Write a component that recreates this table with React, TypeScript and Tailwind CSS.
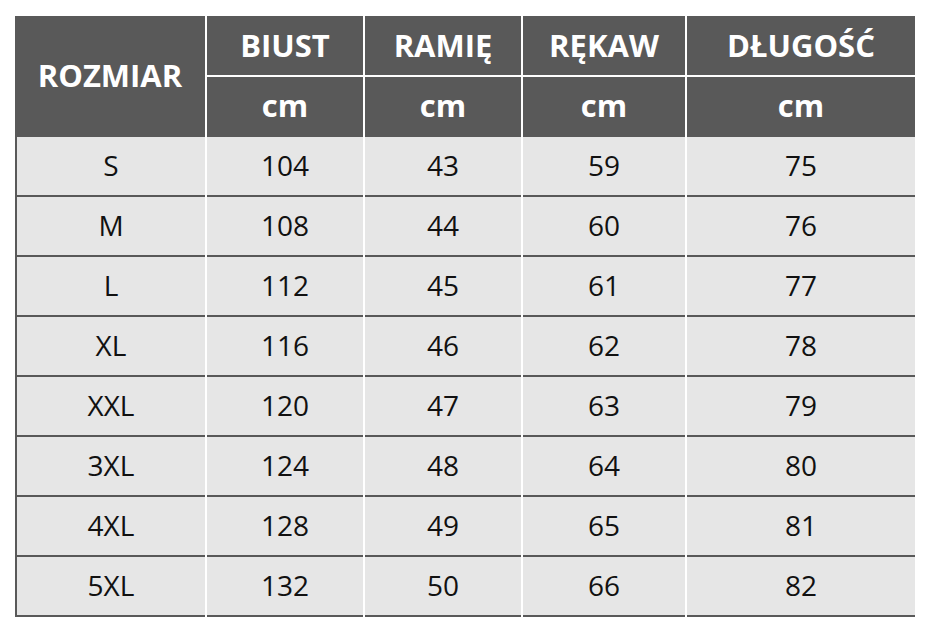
import React from 'react';

const columns = ['BIUST', 'RAMIĘ', 'RĘKAW', 'DŁUGOŚĆ'];

const rows: [string, number, number, number, number][] = [
    ['S', 104, 43, 59, 75],
    ['M', 108, 44, 60, 76],
    ['L', 112, 45, 61, 77],
    ['XL', 116, 46, 62, 78],
    ['XXL', 120, 47, 63, 79],
    ['3XL', 124, 48, 64, 80],
    ['4XL', 128, 49, 65, 81],
    ['5XL', 132, 50, 66, 82],
];

export default function App() {
    return (
        <div className="w-[932px] h-[632px] bg-white pl-[15px] pt-[16px]" style={{ fontFamily: '"Open Sans", "Noto Sans", sans-serif' }}>
            <div className="grid grid-cols-[190px_156px_156px_162px_228px] gap-x-[2px]">
                {/* header */}
                <div className="row-span-2 h-[121px] pb-[2px] bg-[#595959] text-white font-bold text-[31px] flex items-center justify-center">
                    ROZMIAR
                </div>
                {columns.map((c) => (
                    <div key={c} className="h-[61px] bg-[#595959] border-b-2 border-white text-white font-bold text-[31px] flex items-center justify-center">
                        {c}
                    </div>
                ))}
                {columns.map((c) => (
                    <div key={c + '-cm'} className="h-[60px] pb-[3px] bg-[#595959] text-white font-bold text-[31px] flex items-center justify-center">
                        cm
                    </div>
                ))}

                {/* body */}
                {rows.map((r) => (
                    <React.Fragment key={r[0]}>
                        {r.map((v, i) => (
                            <div
                                key={i}
                                className={`h-[60px] pb-[2px] bg-[#e6e6e6] border-b-2 border-[#595959] text-[#111] text-[28px] flex items-center justify-center ${i === 0 ? 'border-l-2' : ''}`}
                            >
                                {v}
                            </div>
                        ))}
                    </React.Fragment>
                ))}
            </div>
        </div>
    );
}
